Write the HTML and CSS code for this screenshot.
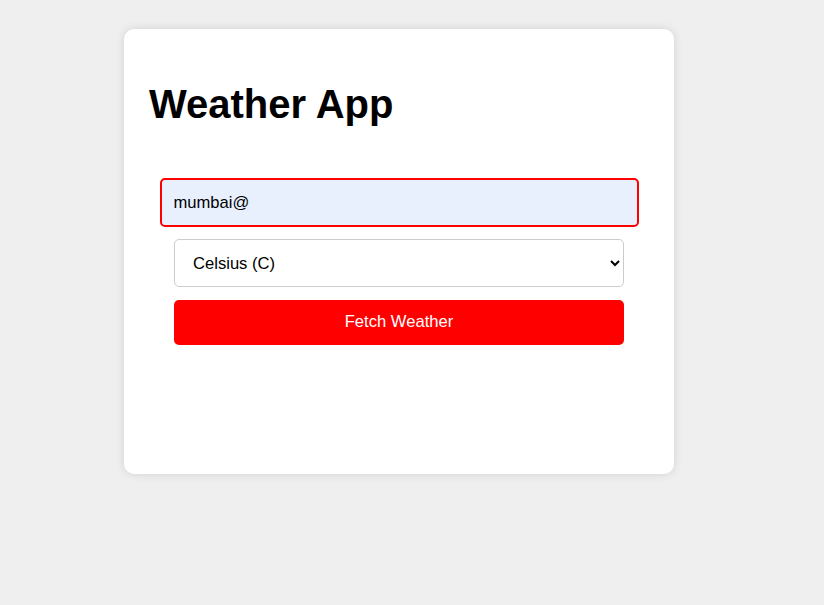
FILE: index.html
```html
<!DOCTYPE html>
<html>
<head>
<meta charset="utf-8">
<link rel="stylesheet" href="styles.css">
</head>
<body>
<div class="card">
  <h1 class="title">Weather App</h1>
  <form class="form">
    <input class="city" type="text" value="mumbai@">
    <select class="unit">
      <option>Celsius (C)</option>
      <option>Fahrenheit (F)</option>
    </select>
    <button class="fetch" type="button">Fetch Weather</button>
  </form>
</div>
</body>
</html>
```
FILE: styles.css
```css
* { box-sizing: border-box; }
html, body { margin: 0; }
body {
  background: #efefef;
  font-family: "Liberation Sans", Arial, sans-serif;
  padding: 29px 0 0 124px;
  min-height: 605px;
}
.card {
  width: 550px;
  height: 445px;
  background: #fff;
  border-radius: 10px;
  box-shadow: 0 0 10px rgba(0, 0, 0, 0.12);
  padding: 25px;
}
.title {
  margin: 27px 0 0 0;
  font-size: 40px;
  font-weight: bold;
  line-height: 46px;
  color: #000;
}
.form {
  display: flex;
  flex-direction: column;
  align-items: center;
  gap: 12px;
  padding-top: 51px;
}
.city {
  width: 479px;
  height: 49px;
  border: 2px solid #ff0000;
  border-radius: 5px;
  background: #e8f0fe;
  padding: 0 12px;
  font-family: "Liberation Sans", Arial, sans-serif;
  font-size: 16.6px;
  color: #000;
  outline: none;
  margin: 0;
}
.unit {
  width: 450px;
  height: 48px;
  border: 1px solid #ccc;
  border-radius: 5px;
  background: #fff;
  padding: 0 7px 0 14px;
  font-family: "Liberation Sans", Arial, sans-serif;
  font-size: 16.6px;
  color: #000;
  margin: 0;
}
.fetch {
  width: 450px;
  height: 45px;
  margin-top: 1px;
  padding: 0 0 2px 0;
  border: none;
  border-radius: 5px;
  background: #ff0000;
  color: #fff;
  font-family: "Liberation Sans", Arial, sans-serif;
  font-size: 16.6px;
}
```
